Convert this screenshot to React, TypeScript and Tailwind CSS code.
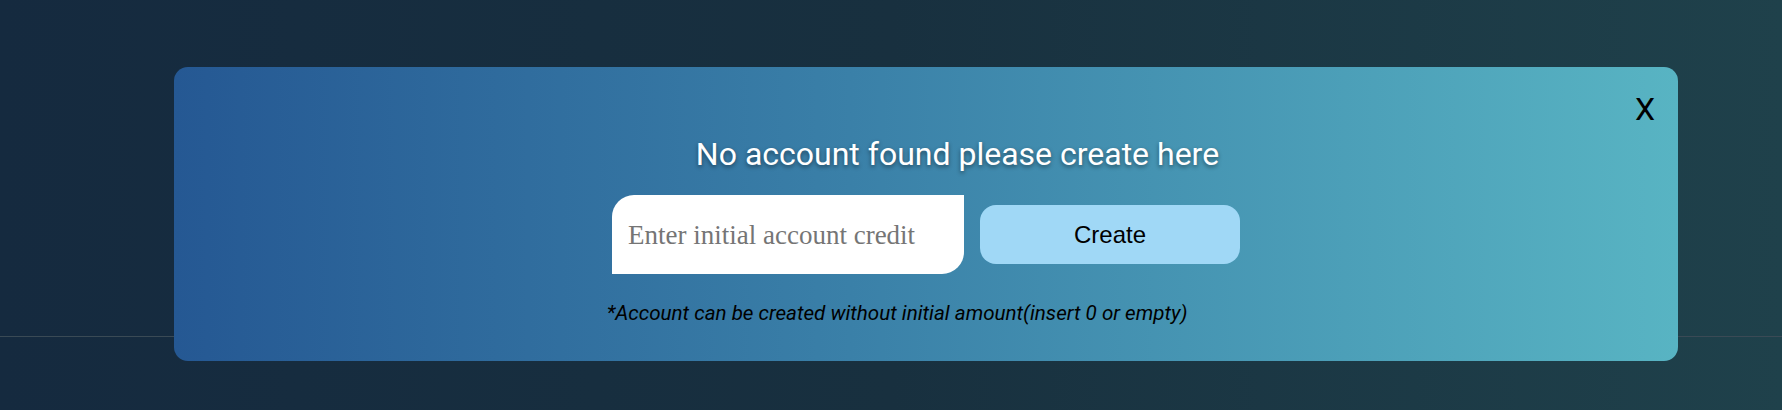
export default function App() {
  return (
    <div className="relative w-full h-[410px] bg-[linear-gradient(90deg,#152a3f_0%,#18303f_50%,#1f414b_100%)] overflow-hidden">
      {/* page footer line */}
      <div className="h-[336px]" />
      <div className="border-t border-[#3a4a55]" />

      {/* modal */}
      <div className="absolute left-[174px] top-[67px] w-[1504px] h-[294px] rounded-[14px] bg-[linear-gradient(90deg,#255893_0%,#3a80a8_45%,#58b4c3_100%)]">
        <button className="absolute top-[23px] right-[23px] text-[32px] leading-[38px] text-black font-['Roboto',sans-serif]">
          X
        </button>

        <div className="flex flex-col items-center pt-[68px]">
          <p className="ml-[63px] text-[32px] leading-[38px] text-white font-['Roboto',sans-serif] [text-shadow:0_2px_4px_rgba(0,0,0,0.45)]">
            No account found please create here
          </p>

          <div className="flex items-center gap-4 mt-[22px]">
            <input
              type="text"
              placeholder="Enter initial account credit"
              className="w-[352px] h-[79px] bg-white rounded-tl-[22px] rounded-br-[22px] pl-4 pt-[2px] text-[27px] text-black placeholder:text-[#757575] font-['Liberation_Serif',serif] outline-none"
            />
            <button className="w-[260px] h-[59px] rounded-[16px] bg-[#a0d8f6] text-[24px] text-black font-['Liberation_Sans',Arial,sans-serif]">
              Create
            </button>
          </div>

          <p className="mr-[58px] mt-[27px] text-[20.6px] leading-[24px] italic text-black font-['Roboto',sans-serif]">
            *Account can be created without initial amount(insert 0 or empty)
          </p>
        </div>
      </div>
    </div>
  );
}
